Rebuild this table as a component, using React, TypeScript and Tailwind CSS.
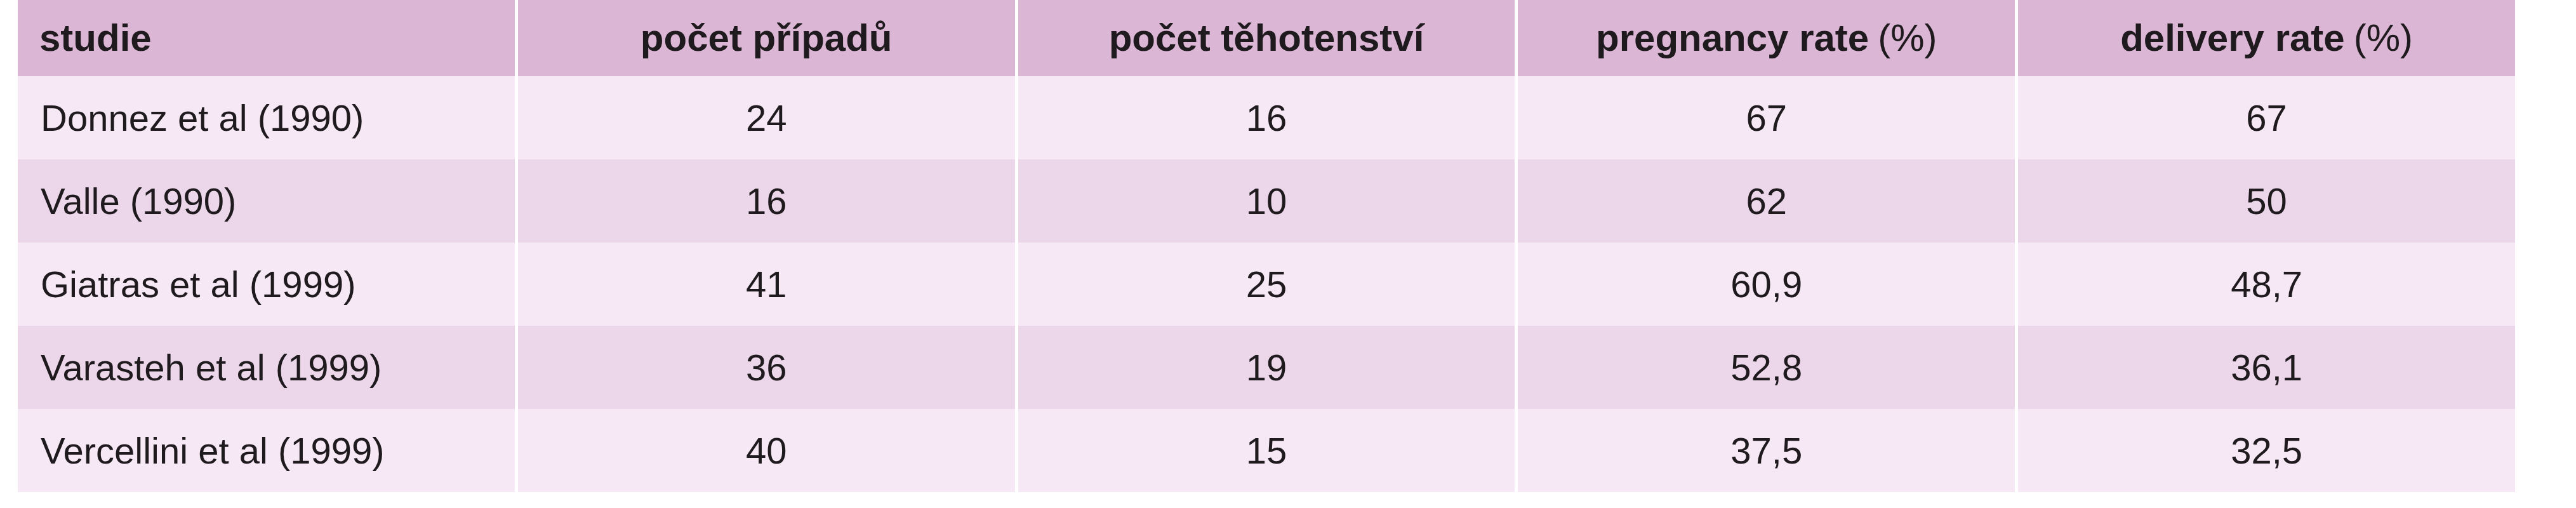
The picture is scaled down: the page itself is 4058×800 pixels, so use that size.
import React from "react";

const rows: [string, string, string, string, string][] = [
  ["Donnez et al (1990)", "24", "16", "67", "67"],
  ["Valle (1990)", "16", "10", "62", "50"],
  ["Giatras et al (1999)", "41", "25", "60,9", "48,7"],
  ["Varasteh et al (1999)", "36", "19", "52,8", "36,1"],
  ["Vercellini et al (1999)", "40", "15", "37,5", "32,5"],
];

export default function App() {
  return (
    <div className="w-[4058px] h-[800px] bg-white pl-[28px] leading-none text-[#1e1a1d] [font-family:'Liberation_Sans',Arial,sans-serif]">
      <div className="w-[3934px] flex flex-col">
        <div className="grid grid-cols-5 gap-x-[5px] h-[120px] text-[60px]">
          <div className="bg-[#dcb6d5] flex items-center pl-[34px] font-bold">studie</div>
          <div className="bg-[#dcb6d5] flex items-center justify-center font-bold">počet případů</div>
          <div className="bg-[#dcb6d5] flex items-center justify-center font-bold">počet těhotenství</div>
          <div className="bg-[#dcb6d5] flex items-center justify-center">
            <span className="font-bold">pregnancy rate</span>
            <span className="ml-[14px]">(%)</span>
          </div>
          <div className="bg-[#dcb6d5] flex items-center justify-center">
            <span className="font-bold">delivery rate</span>
            <span className="ml-[14px]">(%)</span>
          </div>
        </div>
        {rows.map((r, i) => {
          const bg = i % 2 === 0 ? "bg-[#f6e8f5]" : "bg-[#ecd6ea]";
          return (
            <div key={i} className="grid grid-cols-5 gap-x-[5px] h-[131px] text-[58px]">
              <div className={`${bg} flex items-center pl-[36px]`}>{r[0]}</div>
              <div className={`${bg} flex items-center justify-center`}>{r[1]}</div>
              <div className={`${bg} flex items-center justify-center`}>{r[2]}</div>
              <div className={`${bg} flex items-center justify-center`}>{r[3]}</div>
              <div className={`${bg} flex items-center justify-center`}>{r[4]}</div>
            </div>
          );
        })}
      </div>
    </div>
  );
}
